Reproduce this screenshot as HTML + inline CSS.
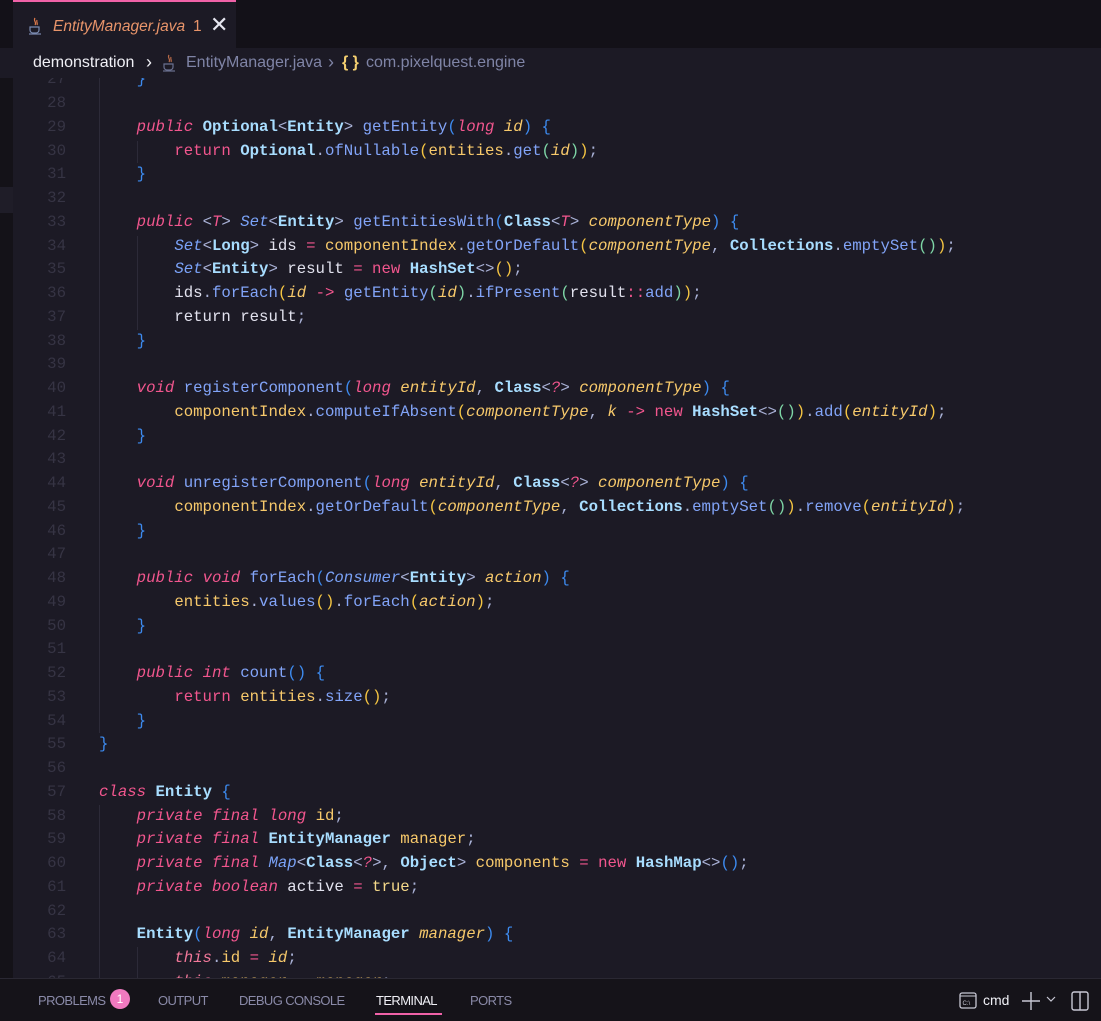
<!DOCTYPE html>
<html><head><meta charset="utf-8"><style>
*{margin:0;padding:0;box-sizing:border-box}
body{width:1101px;height:1021px;overflow:hidden;background:#1c1a25;position:relative;font-family:"Liberation Sans",sans-serif}
#strip{position:absolute;left:0;top:0;width:13px;height:1021px;background:#141218}
#strip2{position:absolute;left:0;top:187px;width:13px;height:26px;background:#1f1d28}
#tabbar{position:absolute;left:0;top:0;width:1101px;height:48px;background:#131118}
#tab{position:absolute;left:13px;top:0;width:223px;height:48px;background:#1c1a25;border-top:2px solid #f062a8}
#tab .nm{position:absolute;left:40px;top:16px;font-size:15.5px;font-style:italic;color:#e8946a}
#tab .n1{position:absolute;left:180px;top:16px;font-size:15.5px;color:#e8946a}
#tab .x{position:absolute;left:197px;top:10px;font-size:22px;color:#e6e6f0}
#bc{position:absolute;left:0;top:48px;width:1101px;height:30px;background:#1c1a25;z-index:3}
#bc span{position:absolute;top:6px;font-size:16px}
#code{position:absolute;left:0;top:68.4px;width:1101px;font-family:"Liberation Mono",monospace;font-size:15.7px;line-height:23.75px;color:#e2e2ee;white-space:pre}
.ln{position:absolute;left:0;width:66px;text-align:right;color:#363444}
.tx{position:absolute;left:99px}
.k{color:#f2568e;font-style:italic}
.kw{color:#f2568e}
.t{color:#a8ddff;font-weight:bold}
.ti{color:#7aa2f7;font-style:italic}
.m{color:#82a4f8}
.f{color:#f7c96b}
.p{color:#f7c96b;font-style:italic}
.pn{color:#a9b1d6}
.b{color:#3d8bf0}
.y{color:#f5c542}
.g{color:#7ed6a6}
.o{color:#f2568e}
.tv{color:#f2568e;font-style:italic}
.tr{color:#f5d98a}
.guide{position:absolute;width:1px;background:#2c2a38}
#panel{position:absolute;left:0;top:978px;width:1101px;height:43px;background:#151319;border-top:1px solid #2a2833;z-index:4}
#panel span{position:absolute;top:14px;font-size:13px;color:#8a8aa8;letter-spacing:-0.6px}
</style></head><body>
<div id="strip"></div><div id="strip2"></div>
<div class="guide" style="left:99px;top:78px;height:655px"></div>
<div class="guide" style="left:99px;top:805px;height:175px"></div>
<div class="guide" style="left:137px;top:141px;height:22px"></div>
<div class="guide" style="left:137px;top:236px;height:94px"></div>
<div class="guide" style="left:137px;top:947px;height:33px"></div>
<div id="code">
<div class="ln" style="top:0">27</div><div class="tx" style="top:0">    <span class="b">}</span></div>
<div class="ln" style="top:23.75px">28</div>
<div class="ln" style="top:47.5px">29</div><div class="tx" style="top:47.5px">    <span class="k">public</span> <span class="t">Optional</span><span class="pn">&lt;</span><span class="t">Entity</span><span class="pn">&gt;</span> <span class="m">getEntity</span><span class="b">(</span><span class="k">long</span> <span class="p">id</span><span class="b">)</span> <span class="b">{</span></div>
<div class="ln" style="top:71.25px">30</div><div class="tx" style="top:71.25px">        <span class="kw">return</span> <span class="t">Optional</span><span class="pn">.</span><span class="m">ofNullable</span><span class="y">(</span><span class="f">entities</span><span class="pn">.</span><span class="m">get</span><span class="g">(</span><span class="p">id</span><span class="g">)</span><span class="y">)</span><span class="pn">;</span></div>
<div class="ln" style="top:95px">31</div><div class="tx" style="top:95px">    <span class="b">}</span></div>
<div class="ln" style="top:118.75px">32</div>
<div class="ln" style="top:142.5px">33</div><div class="tx" style="top:142.5px">    <span class="k">public</span> <span class="pn">&lt;</span><span class="tv">T</span><span class="pn">&gt;</span> <span class="ti">Set</span><span class="pn">&lt;</span><span class="t">Entity</span><span class="pn">&gt;</span> <span class="m">getEntitiesWith</span><span class="b">(</span><span class="t">Class</span><span class="pn">&lt;</span><span class="tv">T</span><span class="pn">&gt;</span> <span class="p">componentType</span><span class="b">)</span> <span class="b">{</span></div>
<div class="ln" style="top:166.25px">34</div><div class="tx" style="top:166.25px">        <span class="ti">Set</span><span class="pn">&lt;</span><span class="t">Long</span><span class="pn">&gt;</span> ids <span class="o">=</span> <span class="f">componentIndex</span><span class="pn">.</span><span class="m">getOrDefault</span><span class="y">(</span><span class="p">componentType</span><span class="pn">,</span> <span class="t">Collections</span><span class="pn">.</span><span class="m">emptySet</span><span class="g">()</span><span class="y">)</span><span class="pn">;</span></div>
<div class="ln" style="top:190px">35</div><div class="tx" style="top:190px">        <span class="ti">Set</span><span class="pn">&lt;</span><span class="t">Entity</span><span class="pn">&gt;</span> result <span class="o">=</span> <span class="kw">new</span> <span class="t">HashSet</span><span class="pn">&lt;&gt;</span><span class="y">()</span><span class="pn">;</span></div>
<div class="ln" style="top:213.75px">36</div><div class="tx" style="top:213.75px">        ids<span class="pn">.</span><span class="m">forEach</span><span class="y">(</span><span class="p">id</span> <span class="o">-&gt;</span> <span class="m">getEntity</span><span class="g">(</span><span class="p">id</span><span class="g">)</span><span class="pn">.</span><span class="m">ifPresent</span><span class="g">(</span>result<span class="o">::</span><span class="m">add</span><span class="g">)</span><span class="y">)</span><span class="pn">;</span></div>
<div class="ln" style="top:237.5px">37</div><div class="tx" style="top:237.5px">        return result<span class="pn">;</span></div>
<div class="ln" style="top:261.25px">38</div><div class="tx" style="top:261.25px">    <span class="b">}</span></div>
<div class="ln" style="top:285px">39</div>
<div class="ln" style="top:308.75px">40</div><div class="tx" style="top:308.75px">    <span class="k">void</span> <span class="m">registerComponent</span><span class="b">(</span><span class="k">long</span> <span class="p">entityId</span><span class="pn">,</span> <span class="t">Class</span><span class="pn">&lt;</span><span class="tv">?</span><span class="pn">&gt;</span> <span class="p">componentType</span><span class="b">)</span> <span class="b">{</span></div>
<div class="ln" style="top:332.5px">41</div><div class="tx" style="top:332.5px">        <span class="f">componentIndex</span><span class="pn">.</span><span class="m">computeIfAbsent</span><span class="y">(</span><span class="p">componentType</span><span class="pn">,</span> <span class="p">k</span> <span class="o">-&gt;</span> <span class="kw">new</span> <span class="t">HashSet</span><span class="pn">&lt;&gt;</span><span class="g">()</span><span class="y">)</span><span class="pn">.</span><span class="m">add</span><span class="y">(</span><span class="p">entityId</span><span class="y">)</span><span class="pn">;</span></div>
<div class="ln" style="top:356.25px">42</div><div class="tx" style="top:356.25px">    <span class="b">}</span></div>
<div class="ln" style="top:380px">43</div>
<div class="ln" style="top:403.75px">44</div><div class="tx" style="top:403.75px">    <span class="k">void</span> <span class="m">unregisterComponent</span><span class="b">(</span><span class="k">long</span> <span class="p">entityId</span><span class="pn">,</span> <span class="t">Class</span><span class="pn">&lt;</span><span class="tv">?</span><span class="pn">&gt;</span> <span class="p">componentType</span><span class="b">)</span> <span class="b">{</span></div>
<div class="ln" style="top:427.5px">45</div><div class="tx" style="top:427.5px">        <span class="f">componentIndex</span><span class="pn">.</span><span class="m">getOrDefault</span><span class="y">(</span><span class="p">componentType</span><span class="pn">,</span> <span class="t">Collections</span><span class="pn">.</span><span class="m">emptySet</span><span class="g">()</span><span class="y">)</span><span class="pn">.</span><span class="m">remove</span><span class="y">(</span><span class="p">entityId</span><span class="y">)</span><span class="pn">;</span></div>
<div class="ln" style="top:451.25px">46</div><div class="tx" style="top:451.25px">    <span class="b">}</span></div>
<div class="ln" style="top:475px">47</div>
<div class="ln" style="top:498.75px">48</div><div class="tx" style="top:498.75px">    <span class="k">public</span> <span class="k">void</span> <span class="m">forEach</span><span class="b">(</span><span class="ti">Consumer</span><span class="pn">&lt;</span><span class="t">Entity</span><span class="pn">&gt;</span> <span class="p">action</span><span class="b">)</span> <span class="b">{</span></div>
<div class="ln" style="top:522.5px">49</div><div class="tx" style="top:522.5px">        <span class="f">entities</span><span class="pn">.</span><span class="m">values</span><span class="y">()</span><span class="pn">.</span><span class="m">forEach</span><span class="y">(</span><span class="p">action</span><span class="y">)</span><span class="pn">;</span></div>
<div class="ln" style="top:546.25px">50</div><div class="tx" style="top:546.25px">    <span class="b">}</span></div>
<div class="ln" style="top:570px">51</div>
<div class="ln" style="top:593.75px">52</div><div class="tx" style="top:593.75px">    <span class="k">public</span> <span class="k">int</span> <span class="m">count</span><span class="b">()</span> <span class="b">{</span></div>
<div class="ln" style="top:617.5px">53</div><div class="tx" style="top:617.5px">        <span class="kw">return</span> <span class="f">entities</span><span class="pn">.</span><span class="m">size</span><span class="y">()</span><span class="pn">;</span></div>
<div class="ln" style="top:641.25px">54</div><div class="tx" style="top:641.25px">    <span class="b">}</span></div>
<div class="ln" style="top:665px">55</div><div class="tx" style="top:665px"><span class="b">}</span></div>
<div class="ln" style="top:688.75px">56</div>
<div class="ln" style="top:712.5px">57</div><div class="tx" style="top:712.5px"><span class="k">class</span> <span class="t">Entity</span> <span class="b">{</span></div>
<div class="ln" style="top:736.25px">58</div><div class="tx" style="top:736.25px">    <span class="k">private</span> <span class="k">final</span> <span class="k">long</span> <span class="f">id</span><span class="pn">;</span></div>
<div class="ln" style="top:760px">59</div><div class="tx" style="top:760px">    <span class="k">private</span> <span class="k">final</span> <span class="t">EntityManager</span> <span class="f">manager</span><span class="pn">;</span></div>
<div class="ln" style="top:783.75px">60</div><div class="tx" style="top:783.75px">    <span class="k">private</span> <span class="k">final</span> <span class="ti">Map</span><span class="pn">&lt;</span><span class="t">Class</span><span class="pn">&lt;</span><span class="tv">?</span><span class="pn">&gt;,</span> <span class="t">Object</span><span class="pn">&gt;</span> <span class="f">components</span> <span class="o">=</span> <span class="kw">new</span> <span class="t">HashMap</span><span class="pn">&lt;&gt;</span><span class="b">()</span><span class="pn">;</span></div>
<div class="ln" style="top:807.5px">61</div><div class="tx" style="top:807.5px">    <span class="k">private</span> <span class="k">boolean</span> active <span class="o">=</span> <span class="tr">true</span><span class="pn">;</span></div>
<div class="ln" style="top:831.25px">62</div>
<div class="ln" style="top:855px">63</div><div class="tx" style="top:855px">    <span class="t">Entity</span><span class="b">(</span><span class="k">long</span> <span class="p">id</span><span class="pn">,</span> <span class="t">EntityManager</span> <span class="p">manager</span><span class="b">)</span> <span class="b">{</span></div>
<div class="ln" style="top:878.75px">64</div><div class="tx" style="top:878.75px">        <span class="tv" style="color:#f2789a">this</span><span class="pn">.</span><span class="f">id</span> <span class="o">=</span> <span class="p">id</span><span class="pn">;</span></div>
<div class="ln" style="top:902.5px">65</div><div class="tx" style="top:902.5px">        <span class="tv" style="color:#f2789a">this</span><span class="pn">.</span><span class="f">manager</span> <span class="o">=</span> <span class="p">manager</span><span class="pn">;</span></div>
</div>
<div id="tabbar"><div id="tab">
<svg style="position:absolute;left:15px;top:15px" width="14" height="18" viewBox="0 0 14 18"><path d="M7 1c-2 3 2 4 0 7M9 3c-1 2 1 3 0 5" stroke="#e07a4a" stroke-width="1.2" fill="none"/><path d="M2 10h9v3a3 3 0 0 1-3 3H5a3 3 0 0 1-3-3z" fill="none" stroke="#7a8ab0" stroke-width="1.2"/><path d="M1 17h12" stroke="#7a8ab0" stroke-width="1.2"/></svg>
<span class="nm">EntityManager.java</span><span class="n1">1</span><span class="x">✕</span></div></div>
<div id="bc">
<span style="left:33px;color:#f0f0f6">demonstration</span>
<span style="left:146px;color:#f0f0f6;top:4px;font-size:18px">›</span>
<svg style="position:absolute;left:162px;top:6px" width="14" height="18" viewBox="0 0 14 18"><path d="M7 1c-2 3 2 4 0 7M9 3c-1 2 1 3 0 5" stroke="#b86a48" stroke-width="1.2" fill="none"/><path d="M2 10h9v3a3 3 0 0 1-3 3H5a3 3 0 0 1-3-3z" fill="none" stroke="#6a7090" stroke-width="1.2"/><path d="M1 17h12" stroke="#6a7090" stroke-width="1.2"/></svg>
<span style="left:186px;color:#7f84a6">EntityManager.java</span>
<span style="left:328px;color:#7f84a6;top:4px;font-size:18px">›</span>
<span style="left:342px;color:#f5d070;font-weight:bold">{ }</span>
<span style="left:366px;color:#7f84a6">com.pixelquest.engine</span>
</div>
<div id="panel">
<span style="left:38px">PROBLEMS</span>
<div style="position:absolute;left:110px;top:10px;width:20px;height:20px;border-radius:10px;background:#f07ac0;color:#fff;font-size:12px;text-align:center;line-height:20px">1</div>
<span style="left:158px">OUTPUT</span>
<span style="left:239px">DEBUG CONSOLE</span>
<span style="left:376px;color:#f0f0f6">TERMINAL</span>
<div style="position:absolute;left:375px;top:34px;width:67px;height:2px;background:#f062a8"></div>
<span style="left:470px">PORTS</span>
<svg style="position:absolute;left:959px;top:13px" width="18" height="17" viewBox="0 0 18 17"><rect x="1" y="1" width="16" height="15" rx="2" fill="none" stroke="#c8c8d4" stroke-width="1.3"/><path d="M1 4h16" stroke="#c8c8d4"/><text x="3.5" y="13" font-size="6" fill="#c8c8d4" font-family="Liberation Sans">C:\</text></svg>
<span style="left:983px;color:#f0f0f6;font-size:14px;top:13px;letter-spacing:0">cmd</span>
<svg style="position:absolute;left:1021px;top:12px" width="20" height="20"><path d="M10 1v18M1 10h18" stroke="#c8c8d4" stroke-width="1.4"/></svg>
<svg style="position:absolute;left:1046px;top:17px" width="10" height="7"><path d="M1 1l4 4 4-4" stroke="#c8c8d4" fill="none" stroke-width="1.2"/></svg>
<svg style="position:absolute;left:1071px;top:12px" width="18" height="20"><rect x="1" y="1" width="16" height="18" rx="2" fill="none" stroke="#c8c8d4" stroke-width="1.4"/><path d="M9 1v18" stroke="#c8c8d4" stroke-width="1.4"/></svg>
</div>
</body></html>
